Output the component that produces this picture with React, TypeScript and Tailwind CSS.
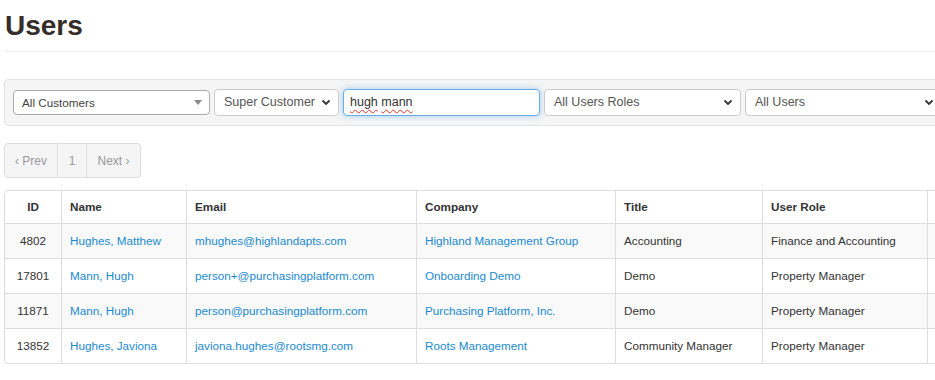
import React from "react";

const rows = [
  { id: "4802", name: "Hughes, Matthew", email: "mhughes@highlandapts.com", company: "Highland Management Group", title: "Accounting", role: "Finance and Accounting" },
  { id: "17801", name: "Mann, Hugh", email: "person+@purchasingplatform.com", company: "Onboarding Demo", title: "Demo", role: "Property Manager" },
  { id: "11871", name: "Mann, Hugh", email: "person@purchasingplatform.com", company: "Purchasing Platform, Inc.", title: "Demo", role: "Property Manager" },
  { id: "13852", name: "Hughes, Javiona", email: "javiona.hughes@rootsmg.com", company: "Roots Management", title: "Community Manager", role: "Property Manager" },
];

const cols = "grid grid-cols-[56px_125px_230px_199px_147px_165px_120px]";

function Chevron() {
  return (
    <svg width="10" height="7" viewBox="0 0 10 7" className="shrink-0">
      <path d="M1.5 1.5 L5 5 L8.5 1.5" fill="none" stroke="#333" strokeWidth="1.8" />
    </svg>
  );
}

function NativeSelect({ label, width }: { label: string; width: string }) {
  return (
    <div className={`${width} h-[27px] shrink-0 flex items-center justify-between bg-white border border-[#ccc] rounded-[4px] pl-[9px] pr-[7px] text-[12.5px] text-[#555]`}>
      <span>{label}</span>
      <Chevron />
    </div>
  );
}

export default function App() {
  return (
    <div className="w-[935px] h-[380px] overflow-hidden bg-white font-['Liberation_Sans',Arial,sans-serif] text-[#333]">
      <div className="w-[1100px] pl-[4px]">
        <h1 className="pl-[1px] mt-[10px] text-[28px] leading-[31px] font-bold text-[#352d2a]">Users</h1>
        <div className="ml-[1px] mt-[10px] border-t border-[#eee]" />

        {/* Filters */}
        <div className="mt-[27px] bg-[#f5f5f5] border border-[#e3e3e3] rounded-[4px] py-[9px] pl-[8px] flex items-center gap-[4px]">
          <div className="w-[197px] h-[25px] shrink-0 flex items-center justify-between bg-white border border-[#aaa] rounded-[4px] pl-[8px] pr-[7px] text-[11.7px] text-[#444]">
            <span className="pt-[1px]">All Customers</span>
            <span className="w-0 h-0 border-l-[4px] border-r-[4px] border-t-[5px] border-l-transparent border-r-transparent border-t-[#888]" />
          </div>
          <NativeSelect label="Super Customer" width="w-[125px]" />
          <div className="w-[197px] h-[27px] shrink-0 flex items-center bg-white border border-[#66afe9] rounded-[4px] px-[6px] text-[12.5px] text-[#333] shadow-[0_0_6px_rgba(102,175,233,0.6)]">
            <span className="underline decoration-wavy decoration-[#e0302a] underline-offset-[3px] decoration-[1px]">hugh</span>
            <span>&nbsp;</span>
            <span className="underline decoration-wavy decoration-[#e0302a] underline-offset-[3px] decoration-[1px]">mann</span>
          </div>
          <NativeSelect label="All Users Roles" width="w-[197px]" />
          <NativeSelect label="All Users" width="w-[197px]" />
        </div>

        {/* Pagination */}
        <div className="mt-[17px] flex text-[12px] text-[#999]">
          <div className="w-[54px] h-[35px] flex items-center justify-center bg-[#f5f5f5] border border-[#ddd] rounded-l-[4px]">‹ Prev</div>
          <div className="w-[29px] h-[35px] flex items-center justify-center bg-[#f5f5f5] border-y border-r border-[#ddd]">1</div>
          <div className="w-[54px] h-[35px] flex items-center justify-center bg-[#f5f5f5] border-y border-r border-[#ddd] rounded-r-[4px]">Next ›</div>
        </div>

        {/* Table */}
        <div className="mt-[12px] w-[1045px] border border-[#ddd] rounded-[4px] overflow-hidden text-[11.7px]">
          <div className={`${cols} h-[32px] font-bold text-[#333]`}>
            <div className="flex items-center justify-center">ID</div>
            <div className="flex items-center px-[8px] border-l border-[#ddd]">Name</div>
            <div className="flex items-center px-[8px] border-l border-[#ddd]">Email</div>
            <div className="flex items-center px-[8px] border-l border-[#ddd]">Company</div>
            <div className="flex items-center px-[8px] border-l border-[#ddd]">Title</div>
            <div className="flex items-center px-[8px] border-l border-[#ddd]">User Role</div>
            <div className="border-l border-[#ddd]" />
          </div>
          {rows.map((r, i) => (
            <div key={r.id} className={`${cols} h-[35px] border-t border-[#ddd] ${i % 2 === 0 ? "bg-[#f9f9f9]" : "bg-white"}`}>
              <div className="flex items-center justify-center text-[#333]">{r.id}</div>
              <div className="flex items-center px-[8px] border-l border-[#ddd] text-[#1a8ad0]">{r.name}</div>
              <div className="flex items-center px-[8px] border-l border-[#ddd] text-[#1a8ad0]">{r.email}</div>
              <div className="flex items-center px-[8px] border-l border-[#ddd] text-[#1a8ad0]">{r.company}</div>
              <div className="flex items-center px-[8px] border-l border-[#ddd] text-[#333]">{r.title}</div>
              <div className="flex items-center px-[8px] border-l border-[#ddd] text-[#333]">{r.role}</div>
              <div className="border-l border-[#ddd]" />
            </div>
          ))}
        </div>
      </div>
    </div>
  );
}
